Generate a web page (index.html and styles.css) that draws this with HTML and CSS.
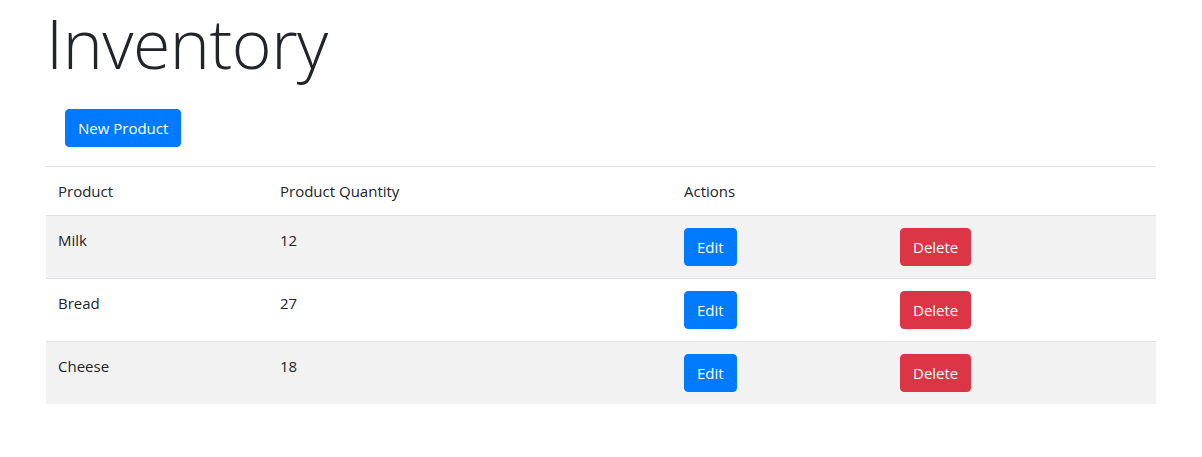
FILE: index.html
```html
<!DOCTYPE html>
<html>
<head>
<meta charset="utf-8">
<link rel="stylesheet" href="styles.css">
</head>
<body>
<div class="container">
  <h1 class="title">Inventory</h1>
  <div class="toolbar">
    <button class="btn btn-primary">New Product</button>
  </div>
  <table class="table">
    <thead>
      <tr><th class="c1">Product</th><th class="c2">Product Quantity</th><th class="c3">Actions</th><th class="c4"></th></tr>
    </thead>
    <tbody>
      <tr class="odd"><td>Milk</td><td>12</td><td><button class="btn btn-primary">Edit</button></td><td><button class="btn btn-danger">Delete</button></td></tr>
      <tr><td>Bread</td><td>27</td><td><button class="btn btn-primary">Edit</button></td><td><button class="btn btn-danger">Delete</button></td></tr>
      <tr class="odd"><td>Cheese</td><td>18</td><td><button class="btn btn-primary">Edit</button></td><td><button class="btn btn-danger">Delete</button></td></tr>
    </tbody>
  </table>
</div>
</body>
</html>
```

FILE: styles.css
```css
* { box-sizing: border-box; }
body {
  margin: 0;
  font-family: "Open Sans", "Noto Sans", sans-serif;
  font-size: 15px;
  line-height: 24px;
  color: #212529;
  background: #fff;
}
.container {
  width: 1140px;
  margin: 0 auto;
  padding: 0 15px;
}
.title {
  margin: -5px 0 18px 0;
  font-size: 68px;
  font-weight: 300;
  line-height: 96px;
  letter-spacing: -0.5px;
}
.toolbar {
  padding-left: 19px;
  margin-bottom: 19px;
  display: flex;
}
.btn {
  font-family: inherit;
  font-size: 15px;
  line-height: 24px;
  font-weight: 400;
  border: 1px solid transparent;
  border-radius: 4px;
  padding: 6px 12px;
  color: #fff;
  height: 38px;
  cursor: pointer;
}
.btn-primary { background: #007bff; border-color: #007bff; }
.btn-danger { background: #dc3545; border-color: #dc3545; }
.table {
  width: 100%;
  border-collapse: collapse;
}
.table th, .table td {
  padding: 12px;
  text-align: left;
  vertical-align: top;
  border-top: 1px solid #dee2e6;
}
.table th { font-weight: 400; }
.table thead th { border-bottom: 1px solid #dee2e6; border-top: 1px solid #dee2e6; }
.c1 { width: 222px; }
.c2 { width: 404px; }
.c3 { width: 216px; }
.table tr.odd { background: #f2f2f2; }
.table tbody tr:first-child td { border-top: 0; }
```
